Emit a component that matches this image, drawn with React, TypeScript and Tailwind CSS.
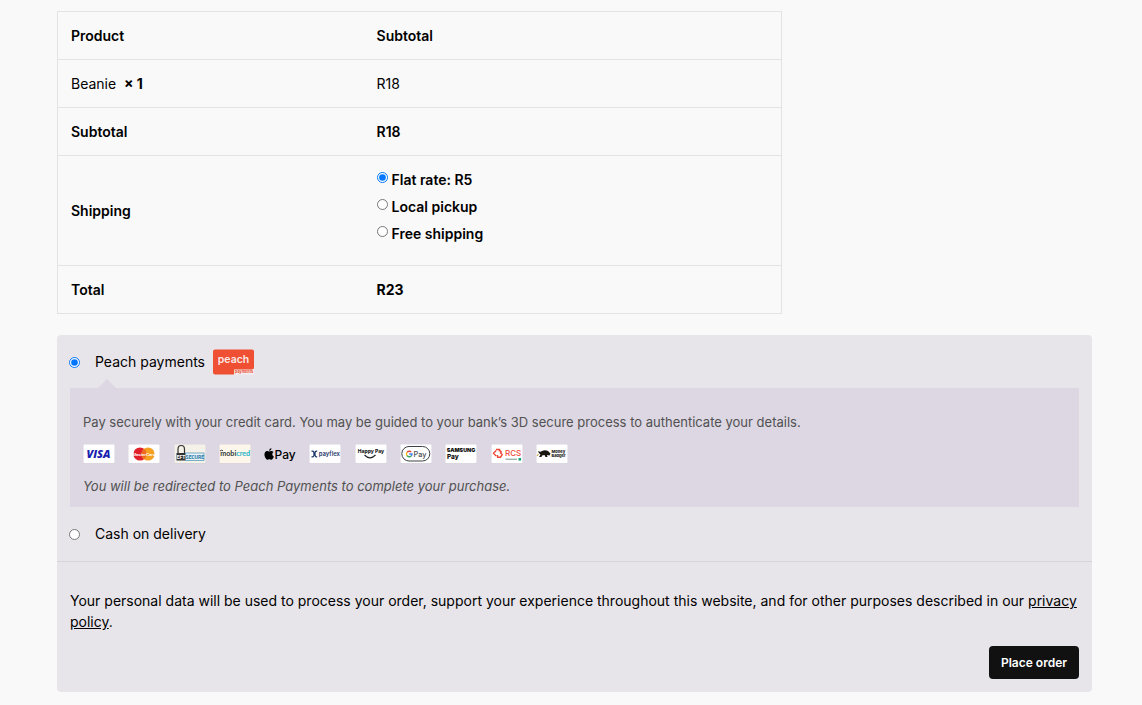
import { useState } from "react";
import type { ReactNode } from "react";

const shippingOptions = [
  { id: "flat_rate", label: "Flat rate: R5" },
  { id: "local_pickup", label: "Local pickup" },
  { id: "free_shipping", label: "Free shipping" },
];

const row = "border-t border-[#e3e3e3]";
const cell = "px-[13px] py-3 text-left leading-[23px]";

// White (or cream) card that a payment brand is printed on
function Card({ label, fill = "#fff", children }: { label: string; fill?: string; children: ReactNode }) {
  return (
    <svg role="img" aria-label={label} viewBox="0 0 32 20" className="h-5 w-8">
      <rect x="0.5" y="1" width="31" height="19" rx="1" fill="#cfc9d6" />
      <rect x="0.5" y="0.5" width="31" height="18.7" rx="1" fill={fill} />
      {children}
    </svg>
  );
}

function PeachLogo() {
  return (
    <svg role="img" aria-label="Peach payments" viewBox="0 0 41 26" className="h-[26px] w-[41px]">
      <rect x="20" y="20" width="21" height="5.5" fill="#f3eef0" />
      <path d="M2 0.5H39Q41 0.5 41 2.5V18.5Q41 20.5 39 20.5H21V25.5H2Q0 25.5 0 23.5V2.5Q0 0.5 2 0.5Z" fill="#ef5033" />
      <text x="20.5" y="14" textAnchor="middle" fontFamily="Inter, sans-serif" fontSize="10.5" fontWeight="600" fill="#fbe9e5">
        peach
      </text>
      <text x="31" y="24.3" textAnchor="middle" fontFamily="Inter, sans-serif" fontSize="3.8" fontWeight="700" fill="#ef5033">
        payments
      </text>
    </svg>
  );
}

function PaymentLogos() {
  return (
    <div className="flex max-w-[485px] items-center justify-between">
      <Card label="Visa">
        <text x="15.5" y="14" textAnchor="middle" fontFamily="Open Sans, sans-serif" fontSize="11" fontWeight="800" fontStyle="italic" fill="#1a1fb0">
          VISA
        </text>
      </Card>
      <Card label="MasterCard">
        <circle cx="12" cy="10" r="6.6" fill="#e2202c" />
        <circle cx="20" cy="10" r="6.6" fill="#f6a021" />
        <path d="M16 4.8A6.6 6.6 0 0 1 16 15.2A6.6 6.6 0 0 1 16 4.8Z" fill="#ee6a22" />
        <text x="16" y="11.6" textAnchor="middle" fontFamily="Liberation Sans, sans-serif" fontSize="4.2" fontWeight="700" fontStyle="italic" fill="#fff">
          MasterCard
        </text>
      </Card>
      <Card label="EFT Secure" fill="#f4f1e8">
        <path d="M4 9V5.2Q4 1.5 7.2 1.5Q10.500 1.5 10.500 5.2V9" fill="none" stroke="#333" strokeWidth="1.200" />
        <rect x="2.500" y="9" width="9" height="7.500" fill="#333" />
        <rect x="11.500" y="9" width="18.500" height="7.500" fill="#e8f2f7" stroke="#2f7fa8" strokeWidth="0.6" />
        <text x="7" y="14.800" textAnchor="middle" fontFamily="Roboto, sans-serif" fontSize="5" fontWeight="700" fill="#fff">
          EFT
        </text>
        <text x="20.800" y="15" textAnchor="middle" fontFamily="Roboto, sans-serif" fontSize="5" fontWeight="700" fill="#2378a5">
          SECURE
        </text>
      </Card>
      <Card label="Mobicred" fill="#fdf6ea">
        <path d="M1 7Q2 5.800 4 6.600" fill="none" stroke="#2f3a3a" strokeWidth="0.900" />
        <text x="16.200" y="12" textAnchor="middle" fontFamily="Lato, sans-serif" fontSize="7.200" fontWeight="700" fill="#2f3a3a">
          mobi<tspan fill="#1fb3c8">cred</tspan>
        </text>
      </Card>
      <svg role="img" aria-label="Apple Pay" viewBox="0 0 32 20" className="h-5 w-8">
        <g transform="translate(-1.800 3) scale(0.58)" fill="#000">
          <path d="M18.700 19.500c-.83 1.240-1.710 2.450-3.050 2.470-1.340.03-1.770-.79-3.290-.79-1.530 0-2 .77-3.270.82-1.310.05-2.300-1.320-3.140-2.530C4.250 17 2.940 12.450 4.700 9.390c.87-1.520 2.430-2.480 4.120-2.510 1.280-.02 2.500.87 3.290.87.78 0 2.260-1.070 3.810-.91.65.03 2.470.26 3.640 1.980-.09.06-2.170 1.280-2.150 3.810.03 3.020 2.650 4.030 2.680 4.040-.03.07-.42 1.440-1.380 2.830M13 3.500c.73-.83 1.940-1.460 2.940-1.500.13 1.170-.34 2.350-1.040 3.190-.69.85-1.830 1.510-2.950 1.420-.15-1.150.41-2.350 1.050-3.110z" />
        </g>
        <text x="10.600" y="14.700" fontFamily="Inter, sans-serif" fontSize="12" fontWeight="500" fill="#000">
          Pay
        </text>
      </svg>
      <Card label="Payflex">
        <path d="M2.500 7.200H3.600Q5 7.200 5 10Q5 12.800 3.600 12.800H2.500M8.200 7.200H7.400Q6 7.200 6 10Q6 12.800 7.400 12.800H8.200M4.500 10H6.500" fill="none" stroke="#1d3768" strokeWidth="1.200" />
        <text x="9.800" y="12" fontFamily="Inter, sans-serif" fontSize="5.900" fontWeight="600" fill="#1d3768">
          payflex
        </text>
      </Card>
      <Card label="Happy Pay">
        <text x="16" y="9.300" textAnchor="middle" fontFamily="Inter, sans-serif" fontSize="5" fontWeight="800" fill="#222">
          Happy Pay
        </text>
        <path d="M9.500 11Q15 16.500 20.500 11" fill="none" stroke="#222" strokeWidth="1.200" />
      </Card>
      <Card label="Google Pay">
        <rect x="1.800" y="2.500" width="28" height="14.500" rx="7.200" fill="#fff" stroke="#3c4043" strokeWidth="1" />
        <g fill="none" strokeWidth="1.400">
          <path d="M11.200 8A2.800 2.800 0 0 0 7 8.300" stroke="#ea4335" />
          <path d="M7 8.300A2.800 2.800 0 0 0 7 11.700" stroke="#fbbc04" />
          <path d="M7 11.700A2.800 2.800 0 0 0 11.200 12" stroke="#34a853" />
          <path d="M11.200 12A2.800 2.800 0 0 0 12 10H9.200" stroke="#4285f4" />
        </g>
        <text x="13.500" y="12.800" fontFamily="Inter, sans-serif" fontSize="7.300" fontWeight="500" fill="#4a4d51">
          Pay
        </text>
      </Card>
      <Card label="Samsung Pay">
        <text x="16" y="8" textAnchor="middle" fontFamily="Inter, sans-serif" fontSize="5.400" fontWeight="900" fill="#111">
          SAMSUNG
        </text>
        <text x="2" y="15" fontFamily="Inter, sans-serif" fontSize="6.500" fontWeight="800" fill="#111">
          Pay
        </text>
      </Card>
      <Card label="RCS">
        <path d="M5.200 6.500L2.500 9.300L5.200 12M5 5.500H8.500V7.500M8 5.500L10.800 8.500M6 13.200H9.500L11.200 10.500L9 8.500M6.500 11V13.200" fill="none" stroke="#ef4836" strokeWidth="1.400" />
        <text x="14" y="12" fontFamily="Inter, sans-serif" fontSize="8" fontWeight="500" fill="#ef4836">
          RCS
        </text>
        <path d="M14.500 15.200H26" stroke="#3b6b57" strokeWidth="0.700" />
        <rect x="27.500" y="14" width="2.600" height="2.600" fill="#17a673" />
      </Card>
      <Card label="Money Badger">
        <path d="M2 6.800Q4 8.500 6 7Q9 5.500 12 7L14.500 9.500L13.500 11.500L11 11L11.500 13H9.500L8.500 11L6 11.500L5.500 13H3L4.500 10.500Q2.500 9.500 2 6.800Z" fill="#191510" />
        <path d="M2.500 10L1 12" stroke="#d09a2a" strokeWidth="1" />
        <text x="15.500" y="9.400" fontFamily="Inter, sans-serif" fontSize="4" fontWeight="800" fill="#222">
          Money
        </text>
        <text x="15.500" y="13" fontFamily="Inter, sans-serif" fontSize="4" fontWeight="800" fill="#222">
          Badger
        </text>
      </Card>
    </div>
  );
}

export default function App() {
  const [shipping, setShipping] = useState("flat_rate");
  const [payment, setPayment] = useState("peach");

  return (
    <main className="min-h-screen bg-[#f9f9f9] pt-[11px] pr-[50px] pb-3 pl-[57px] font-['Inter',sans-serif] text-sm text-black">
      {/* Order review */}
      <table className="w-[70%] table-fixed border-collapse border border-[#e3e3e3]">
        <colgroup>
          <col className="w-[42.3%]" />
          <col />
        </colgroup>
        <thead>
          <tr>
            <th className={`${cell} font-semibold`}>Product</th>
            <th className={`${cell} font-semibold`}>Subtotal</th>
          </tr>
        </thead>
        <tbody>
          <tr className={row}>
            <td className={cell}>
              Beanie&nbsp; <strong className="font-bold">×&nbsp;1</strong>
            </td>
            <td className={cell}>R18</td>
          </tr>
        </tbody>
        <tfoot className="font-semibold">
          <tr className={row}>
            <th className={`${cell} font-semibold`}>Subtotal</th>
            <td className={cell}>R18</td>
          </tr>
          <tr className={row}>
            <th className={`${cell} font-semibold`}>Shipping</th>
            <td className={cell}>
              <ul className="pb-1">
                {shippingOptions.map((option) => (
                  <li key={option.id} className="flex h-[27px] items-start gap-1">
                    <input
                      type="radio"
                      id={option.id}
                      name="shipping"
                      className="mt-1 size-[11px] accent-[#0075ff]"
                      checked={shipping === option.id}
                      onChange={() => setShipping(option.id)}
                    />
                    <label htmlFor={option.id}>{option.label}</label>
                  </li>
                ))}
              </ul>
            </td>
          </tr>
          <tr className={row}>
            <th className={`${cell} font-semibold`}>Total</th>
            <td className={`${cell} font-bold`}>R23</td>
          </tr>
        </tfoot>
      </table>

      {/* Payment methods */}
      <section className="mt-[21px] rounded bg-[#e8e5ea]">
        <div className="border-b border-[#d6d3d9] px-3 pt-[13px] pb-[13px]">
          <div className="flex h-7 items-center">
            <input
              type="radio"
              id="peach"
              name="payment"
              className="size-[11px] accent-[#0075ff]"
              checked={payment === "peach"}
              onChange={() => setPayment("peach")}
            />
            <label htmlFor="peach" className="flex items-center gap-2 pl-[15px]">
              Peach payments
              <PeachLogo />
            </label>
          </div>

          <div className="relative mx-px mt-3 bg-[#dcd7e2] px-[13px] pt-6 pb-[11px] text-[13px] leading-5 text-[#515151]">
            <span className="absolute -top-[9px] left-7 border-x-[9px] border-b-[9px] border-x-transparent border-b-[#dcd7e2]" />
            <p className="mb-3">
              Pay securely with your credit card. You may be guided to your bank’s 3D secure process to authenticate your details.
            </p>
            <PaymentLogos />
            <p className="mt-3 italic">You will be redirected to Peach Payments to complete your purchase.</p>
          </div>

          <div className="mt-[13px] flex h-7 items-center">
            <input
              type="radio"
              id="cod"
              name="payment"
              className="size-[11px] accent-[#0075ff]"
              checked={payment === "cod"}
              onChange={() => setPayment("cod")}
            />
            <label htmlFor="cod" className="pl-[15px]">
              Cash on delivery
            </label>
          </div>
        </div>

        <div className="px-[13px] pt-7 pb-[13px]">
          <p className="leading-[21px]">
            Your personal data will be used to process your order, support your experience throughout this website, and for other
            purposes described in our{" "}
            <a href="#privacy" className="underline">
              privacy policy
            </a>
            .
          </p>
          <div className="mt-[14px] flex justify-end">
            <button type="button" className="h-[33px] rounded bg-[#111] px-3 text-xs font-semibold text-white">
              Place order
            </button>
          </div>
        </div>
      </section>
    </main>
  );
}
